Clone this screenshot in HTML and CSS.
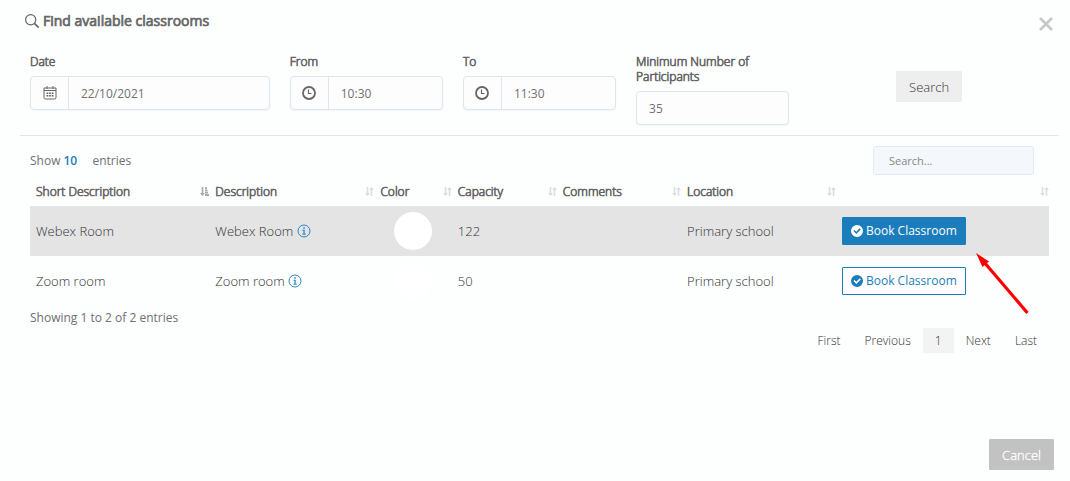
FILE: index.html
```
<!DOCTYPE html>
<html lang="en">
<head>
    <meta charset="UTF-8">
    <meta name="viewport" content="width=device-width, initial-scale=1.0">
    <title>Find available classrooms</title>
    <link rel="stylesheet" href="styles.css">
</head>
<body>
    <svg class="sprite" aria-hidden="true">
        <symbol id="icon-sort" viewBox="0 0 9 9">
            <path d="M2.500 0v8M6.500 9V1" fill="none" stroke="currentColor" stroke-width="1.600"/>
            <path d="M0 6h5L2.500 9zM4 3h5L6.500 0z" fill="currentColor"/>
        </symbol>
        <symbol id="icon-sort-asc" viewBox="0 0 9 9">
            <path d="M2.500 0v8" fill="none" stroke="currentColor" stroke-width="1.600"/>
            <path d="M0 6h5L2.500 9z" fill="currentColor"/>
            <path d="M5 1h2M5 3.300h2.500M5 5.600h3M5 8h4" fill="none" stroke="currentColor" stroke-width="1.800"/>
        </symbol>
        <symbol id="icon-clock" viewBox="0 0 14 14">
            <circle cx="7" cy="7" r="6" fill="none" stroke="currentColor" stroke-width="1.800"/>
            <path d="M6.500 3.500v4h3" fill="none" stroke="currentColor" stroke-width="1.200"/>
        </symbol>
        <symbol id="icon-info" viewBox="0 0 14 14">
            <circle cx="7" cy="7" r="6" fill="none" stroke="currentColor"/>
            <path d="M6.300 3.200h1.500v1.500H6.300zM5.500 5.800h2.200v4h1v1H5.400v-1h1v-3h-.9z" fill="currentColor"/>
        </symbol>
        <symbol id="icon-check" viewBox="0 0 12 12">
            <path fill-rule="evenodd" d="M6 0a6 6 0 1 1 0 12A6 6 0 0 1 6 0zM2.500 6.100l2.800 2.800 4.500-4.500-1.100-1.100-3.400 3.400L3.600 5z" fill="currentColor"/>
        </symbol>
    </svg>

    <div class="modal">
        <div class="modal-header">
            <svg class="title-icon" viewBox="0 0 14 14" aria-hidden="true">
                <circle cx="5.700" cy="5.700" r="5.100" fill="none" stroke="currentColor" stroke-width="1.200"/>
                <path d="M9.400 9.400l4.200 4.200" fill="none" stroke="currentColor" stroke-width="1.600"/>
            </svg>
            <h1>Find available classrooms</h1>
            <button class="close" type="button" aria-label="Close">
                <svg viewBox="0 0 14 14"><path d="M1 1l12 12M13 1L1 13" stroke="currentColor" stroke-width="2.600"/></svg>
            </button>
        </div>

        <form class="filters">
            <div class="field">
                <label for="date">Date</label>
                <div class="input-group">
                    <span class="addon">
                        <svg viewBox="0 0 14 14">
                            <path d="M1 2h12v9.500a1.500 1.500 0 0 1-1.500 1.500h-9a1.500 1.500 0 0 1-1.500-1.500zM1 4.500h12M4 0v3M10 0v3" fill="none" stroke="currentColor"/>
                            <path d="M3.500 7.300h7M3.500 9.800h7" stroke="currentColor" stroke-width="1.500" stroke-dasharray="1.800 .8"/>
                        </svg>
                    </span>
                    <input id="date" type="text" value="22/10/2021">
                </div>
            </div>
            <div class="field">
                <label for="from">From</label>
                <div class="input-group">
                    <span class="addon"><svg><use href="#icon-clock"/></svg></span>
                    <input id="from" type="text" value="10:30">
                </div>
            </div>
            <div class="field">
                <label for="to">To</label>
                <div class="input-group">
                    <span class="addon"><svg><use href="#icon-clock"/></svg></span>
                    <input id="to" type="text" value="11:30">
                </div>
            </div>
            <div class="field">
                <label for="participants">Minimum Number of Participants</label>
                <div class="input-group">
                    <input id="participants" type="text" value="35">
                </div>
            </div>
            <div class="field field-action">
                <button class="btn btn-search" type="button">Search</button>
            </div>
        </form>

        <div class="results">
            <div class="toolbar">
                <div class="length">
                    <label for="length">Show</label>
                    <select id="length">
                        <option>10</option>
                        <option>25</option>
                        <option>50</option>
                    </select>
                    <span>entries</span>
                </div>
                <input class="table-search" type="search" placeholder="Search..." aria-label="Search">
            </div>

            <table class="rooms">
                <colgroup>
                    <col class="col-short">
                    <col class="col-desc">
                    <col class="col-color">
                    <col class="col-capacity">
                    <col class="col-comments">
                    <col class="col-location">
                    <col>
                </colgroup>
                <thead>
                    <tr>
                        <th><div class="th">Short Description<svg class="sorted"><use href="#icon-sort-asc"/></svg></div></th>
                        <th><div class="th">Description<svg><use href="#icon-sort"/></svg></div></th>
                        <th><div class="th">Color<svg><use href="#icon-sort"/></svg></div></th>
                        <th><div class="th">Capacity<svg><use href="#icon-sort"/></svg></div></th>
                        <th><div class="th">Comments<svg><use href="#icon-sort"/></svg></div></th>
                        <th><div class="th">Location<svg><use href="#icon-sort"/></svg></div></th>
                        <th><div class="th"><svg><use href="#icon-sort"/></svg></div></th>
                    </tr>
                </thead>
                <tbody>
                    <tr class="active">
                        <td>Webex Room</td>
                        <td>Webex Room <svg class="info"><use href="#icon-info"/></svg></td>
                        <td><span class="swatch"></span></td>
                        <td>122</td>
                        <td></td>
                        <td>Primary school</td>
                        <td><button class="btn btn-book" type="button"><svg><use href="#icon-check"/></svg>Book Classroom</button></td>
                    </tr>
                    <tr>
                        <td>Zoom room</td>
                        <td>Zoom room <svg class="info"><use href="#icon-info"/></svg></td>
                        <td><span class="swatch"></span></td>
                        <td>50</td>
                        <td></td>
                        <td>Primary school</td>
                        <td><button class="btn btn-book" type="button"><svg><use href="#icon-check"/></svg>Book Classroom</button></td>
                    </tr>
                </tbody>
            </table>

            <p class="summary">Showing 1 to 2 of 2 entries</p>
            <nav class="pagination">
                <a href="#">First</a>
                <a href="#">Previous</a>
                <a href="#" class="current">1</a>
                <a href="#">Next</a>
                <a href="#">Last</a>
            </nav>
        </div>

        <div class="modal-footer">
            <button class="btn btn-cancel" type="button">Cancel</button>
        </div>

        <!-- pointer to the booking button -->
        <svg class="arrow" viewBox="0 0 54 62" aria-hidden="true">
            <path d="M8 9l43.500 51" stroke="#fe0000" stroke-width="3.200"/>
            <path d="M0 0l13 8.500-6.500 5.500z" fill="#fe0000"/>
        </svg>
    </div>
</body>
</html>
```

FILE: styles.css
```
* {
    margin: 0;
    padding: 0;
    box-sizing: border-box;
}

body {
    font-family: 'Open Sans', 'Noto Sans', sans-serif;
    font-size: 13px;
    font-weight: 300;
    color: #333;
    background: #fdfefe;
}

button, input, select {
    font: inherit;
    color: inherit;
}

.sprite {
    position: absolute;
    width: 0;
    height: 0;
}

.modal {
    position: relative;
    padding: 10px 11px 10px 20px;
}

.modal-header {
    display: flex;
    align-items: center;
    gap: 4px;
    height: 21px;
    padding: 0 6px 0 5px;
}

.modal-header h1,
.field label,
.rooms th {
    color: #666;
    -webkit-text-stroke: 0.7px #666;
}

.modal-header h1 {
    flex: 1;
    font-size: 14px;
    font-weight: 400;
}

.title-icon {
    width: 14px;
    height: 14px;
    color: #666;
}

.close {
    align-self: flex-end;
    height: 14px;
    border: none;
    background: none;
    color: #c8c8c8;
}

.close svg {
    display: block;
    width: 14px;
    height: 14px;
}

/* Filters */
.filters {
    display: grid;
    grid-template-columns: minmax(0, 3fr) repeat(3, minmax(0, 2fr)) minmax(0, 3fr);
    padding: 23px 0 10px;
    border-bottom: 1px solid #e4e6e8;
}

.field {
    padding: 0 10px;
}

.field label {
    display: block;
    margin-bottom: 7px;
    font-size: 12px;
    line-height: 15px;
}

.field-action {
    padding-top: 17px;
    text-align: center;
}

.input-group {
    display: flex;
    height: 34px;
    border: 1px solid #dfe4ef;
    border-radius: 4px;
    background: #fdfdfe;
    box-shadow: 0 1px 2px rgba(0, 0, 0, 0.04);
}

.addon {
    display: flex;
    align-items: center;
    justify-content: center;
    width: 38px;
    border-right: 1px solid #dfe4ef;
    color: #666;
}

.addon svg {
    width: 14px;
    height: 14px;
}

.input-group input {
    flex: 1;
    min-width: 0;
    padding: 0 12px;
    border: none;
    outline: none;
    background: none;
    color: #707070;
    font-size: 12px;
    font-weight: 400;
}

/* Buttons */
.btn {
    border: 1px solid transparent;
    border-radius: 1px;
    line-height: 18px;
    cursor: pointer;
}

.btn-search {
    height: 31px;
    padding: 0 12px;
    background: #eee;
}

.btn-cancel {
    height: 31px;
    padding: 0 12px;
    background: #c2c2c2;
    color: white;
    -webkit-text-stroke: 0.3px white;
}

.btn-book {
    display: flex;
    align-items: center;
    gap: 3px;
    height: 28px;
    padding: 0 8px;
    border-color: #1b7dbc;
    background: white;
    color: #1b7dbc;
    font-size: 12px;
    font-weight: 400;
    white-space: nowrap;
}

.btn-book svg {
    width: 12px;
    height: 12px;
}

.active .btn-book {
    background: #1b7dbc;
    color: white;
}

/* Results */
.results {
    padding: 10px 10px 0;
}

.toolbar {
    display: flex;
    justify-content: space-between;
    padding-right: 15px;
    color: #707070;
    font-size: 12px;
    font-weight: 400;
}

.length {
    display: flex;
    align-items: center;
    height: 28px;
}

.length select {
    width: 29px;
    margin-left: 3px;
    border: none;
    appearance: none;
    background: none;
    color: #1b7dbc;
    font-weight: 600;
}

.table-search {
    width: 161px;
    height: 29px;
    padding: 0 15px;
    border: 1px solid #e6eaf0;
    border-radius: 3px;
    background: #f4f7fb;
    font-size: 11px;
}

.table-search::placeholder {
    color: #888;
}

.rooms {
    width: 100%;
    border-collapse: collapse;
    table-layout: fixed;
}

.col-short { width: 17.6%; }
.col-desc { width: 16.2%; }
.col-color { width: 7.6%; }
.col-capacity { width: 10.3%; }
.col-comments { width: 12.2%; }
.col-location { width: 15.2%; }

.rooms th {
    height: 31px;
    padding: 2px 0 0 6px;
    font-size: 12px;
    font-weight: 300;
    text-align: left;
}

.th {
    display: flex;
    align-items: center;
    min-height: 16px;
}

.th svg {
    width: 9px;
    height: 9px;
    margin-left: auto;
    color: #ddd;
}

.th .sorted {
    color: #aaa;
}

.rooms td {
    height: 50px;
    padding: 0 0 0 6px;
}

.rooms .active {
    background: #e4e4e4;
}

.info {
    width: 14px;
    height: 14px;
    vertical-align: -2px;
    color: #2a86c8;
}

.swatch {
    display: block;
    width: 38px;
    height: 38px;
    margin-left: 14px;
    border-radius: 50%;
    background: white;
}

.summary {
    padding-top: 4px;
    color: #707070;
    font-size: 12px;
    font-weight: 400;
    line-height: 16px;
}

.pagination {
    display: flex;
    justify-content: flex-end;
    padding-top: 2px;
    font-size: 12px;
}

.pagination a {
    padding: 0 12px;
    color: #333;
    line-height: 25px;
    text-decoration: none;
}

.pagination .current {
    background: #f3f3f3;
}

.modal-footer {
    display: flex;
    justify-content: flex-end;
    padding: 86px 5px 0 0;
}

.arrow {
    position: absolute;
    top: 253px;
    right: 40px;
    width: 54px;
    height: 62px;
}
```
